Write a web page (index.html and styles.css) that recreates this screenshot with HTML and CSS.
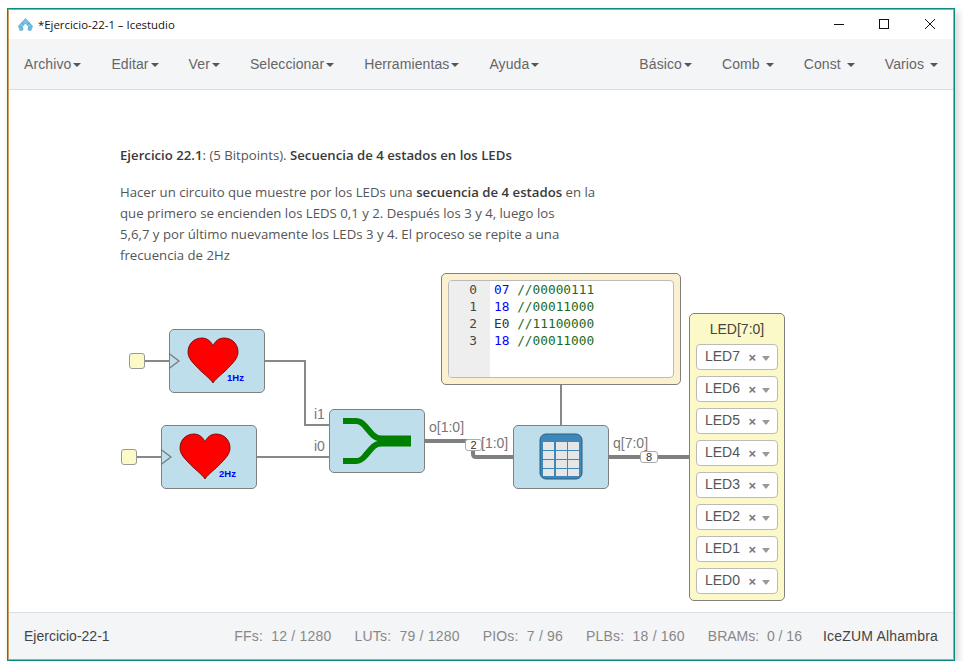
FILE: index.html
```html
<!DOCTYPE html>
<html lang="es">
<head>
    <meta charset="UTF-8">
    <meta name="viewport" content="width=device-width, initial-scale=1.0">
    <title>Ejercicio-22-1 – Icestudio</title>
    <link rel="stylesheet" href="styles.css">
</head>
<body>
    <div class="window">
        <div class="titlebar">
            <svg class="app-icon" width="15" height="13" viewBox="0 0 15 13">
                <path d="M0.500 8 L7.500 0.500 L14.500 8 L13 12.500 L10 12 L10.500 8.500 L7.500 5 L4.500 8.500 L5 12 L2 12.500 Z" fill="#74c4ea" stroke="#4a9cc4" stroke-width="0.600"/>
                <path d="M3.500 4.500 L5.500 6.500 M11.500 4.500 L9.500 6.500 M2 8.500 L4 10.500 M13 8.500 L11 10.500" fill="none" stroke="#3f8fb8" stroke-width="0.700"/>
            </svg>
            <span class="app-title">*Ejercicio-22-1 – Icestudio</span>
            <div class="win-controls">
                <svg width="10" height="10" viewBox="0 0 10 10"><path d="M0 5.500 H10" stroke="#111" fill="none"/></svg>
                <svg width="10" height="10" viewBox="0 0 10 10"><rect x="0.500" y="0.500" width="9" height="9" stroke="#111" fill="none"/></svg>
                <svg class="win-close" width="10" height="10" viewBox="0 0 10 10"><path d="M0 0 L10 10 M10 0 L0 10" stroke="#111" fill="none"/></svg>
            </div>
        </div>

        <nav class="menubar">
            <div class="menu-group">
                <a class="menu-item">Archivo<span class="caret"></span></a>
                <a class="menu-item">Editar<span class="caret"></span></a>
                <a class="menu-item">Ver<span class="caret"></span></a>
                <a class="menu-item">Seleccionar<span class="caret"></span></a>
                <a class="menu-item">Herramientas<span class="caret"></span></a>
                <a class="menu-item">Ayuda<span class="caret"></span></a>
            </div>
            <div class="menu-group">
                <a class="menu-item">Básico<span class="caret"></span></a>
                <a class="menu-item">Comb <span class="caret"></span></a>
                <a class="menu-item">Const <span class="caret"></span></a>
                <a class="menu-item">Varios <span class="caret"></span></a>
            </div>
        </nav>

        <main class="content">
            <div class="info">
                <p><strong>Ejercicio 22.1</strong>: (5 Bitpoints). <strong>Secuencia de 4 estados en los LEDs</strong></p>
                <p>Hacer un circuito que muestre por los LEDs una <strong>secuencia de 4 estados</strong> en la<br>
                que primero se encienden los LEDS 0,1 y 2. Después los 3 y 4, luego los<br>
                5,6,7 y por último nuevamente los LEDs 3 y 4. El proceso se repite a una<br>
                frecuencia de 2Hz</p>
            </div>

            <div class="diagram">
                <svg class="wires" width="670" height="335" viewBox="0 0 670 335">
                    <g fill="none" stroke="#888" stroke-width="2">
                        <path d="M25 91 H49"/>
                        <path d="M145 91 H185 V155 H209"/>
                        <path d="M17 187 H41"/>
                        <path d="M137 187 H209"/>
                        <path d="M441 115 V155"/>
                    </g>
                    <g fill="none" stroke="#808080" stroke-width="4">
                        <path d="M305 171 H350"/>
                        <path d="M353 178 V184 Q353 187 356 187 H393"/>
                        <path d="M489 187 H569"/>
                    </g>
                </svg>

                <div class="pin-in pin-a"></div>
                <div class="pin-in pin-b"></div>

                <div class="block block-clk1">
                    <svg class="clk-mark" width="11" height="16" viewBox="0 0 11 16"><path d="M0 0.500 L10 8 L0 15.500" fill="none" stroke="#777" stroke-width="1.200"/></svg>
                    <svg class="heart" width="52" height="47" viewBox="-1 -1 52 47"><path d="M25 45 C22 40 14 35 8 28 C3 23 0 19 0 14 C0 6 6 0 14 0 C19 0 23 3 25 8 C27 3 31 0 36 0 C44 0 50 6 50 14 C50 19 47 23 42 28 C36 35 28 40 25 45 Z" fill="#f00" stroke="#600" stroke-width="0.800"/></svg>
                    <span class="hz">1Hz</span>
                </div>

                <div class="block block-clk2">
                    <svg class="clk-mark" width="11" height="16" viewBox="0 0 11 16"><path d="M0 0.500 L10 8 L0 15.500" fill="none" stroke="#777" stroke-width="1.200"/></svg>
                    <svg class="heart" width="52" height="47" viewBox="-1 -1 52 47"><path d="M25 45 C22 40 14 35 8 28 C3 23 0 19 0 14 C0 6 6 0 14 0 C19 0 23 3 25 8 C27 3 31 0 36 0 C44 0 50 6 50 14 C50 19 47 23 42 28 C36 35 28 40 25 45 Z" fill="#f00" stroke="#600" stroke-width="0.800"/></svg>
                    <span class="hz">2Hz</span>
                </div>

                <div class="block block-mux">
                    <svg class="mux-icon" width="70" height="50" viewBox="0 0 70 50">
                        <path d="M0 4 H13 Q18 4 22 9 L28 16 Q33 22 40 22 M0 44 H13 Q18 44 22 39 L28 32 Q33 26 40 26" fill="none" stroke="#008000" stroke-width="6"/>
                        <rect x="36" y="18.500" width="32" height="11" fill="#008000"/>
                    </svg>
                </div>

                <div class="block block-rom">
                    <svg class="rom-icon" width="44" height="47" viewBox="0 0 44 47">
                        <rect x="1" y="1" width="42" height="45" rx="6" fill="#3d88b8" stroke="#2a5f82"/>
                        <g fill="#e6e6e6">
                            <rect x="4" y="9" width="11" height="8"/><rect x="17" y="9" width="11" height="8"/><rect x="29" y="9" width="11" height="8"/>
                            <rect x="4" y="18" width="11" height="8"/><rect x="17" y="18" width="11" height="8"/><rect x="29" y="18" width="11" height="8"/>
                            <rect x="4" y="27" width="11" height="8"/><rect x="17" y="27" width="11" height="8"/><rect x="29" y="27" width="11" height="8"/>
                            <rect x="4" y="36" width="11" height="7"/><rect x="17" y="36" width="11" height="7"/><rect x="29" y="36" width="11" height="7"/>
                        </g>
                    </svg>
                </div>

                <span class="wire-label l-i1">i1</span>
                <span class="wire-label l-i0">i0</span>
                <span class="wire-label l-o">o[1:0]</span>
                <span class="wire-label l-in">[1:0]</span>
                <span class="wire-label l-q">q[7:0]</span>
                <span class="bus-size size-2">2</span>
                <span class="bus-size size-8">8</span>

                <div class="memory">
                    <div class="editor">
                        <div class="gutter">0<br>1<br>2<br>3</div>
                        <div class="code">
                            <div><span class="num">07</span> <span class="cmt">//00000111</span></div>
                            <div><span class="num">18</span> <span class="cmt">//00011000</span></div>
                            <div><span class="hex">E0</span> <span class="cmt">//11100000</span></div>
                            <div><span class="num">18</span> <span class="cmt">//00011000</span></div>
                        </div>
                    </div>
                </div>

                <div class="leds">
                    <div class="leds-title">LED[7:0]</div>
                    <div class="led-select"><span class="led-name">LED7</span><span class="clear">×</span><span class="arrow"></span></div>
                    <div class="led-select"><span class="led-name">LED6</span><span class="clear">×</span><span class="arrow"></span></div>
                    <div class="led-select"><span class="led-name">LED5</span><span class="clear">×</span><span class="arrow"></span></div>
                    <div class="led-select"><span class="led-name">LED4</span><span class="clear">×</span><span class="arrow"></span></div>
                    <div class="led-select"><span class="led-name">LED3</span><span class="clear">×</span><span class="arrow"></span></div>
                    <div class="led-select"><span class="led-name">LED2</span><span class="clear">×</span><span class="arrow"></span></div>
                    <div class="led-select"><span class="led-name">LED1</span><span class="clear">×</span><span class="arrow"></span></div>
                    <div class="led-select"><span class="led-name">LED0</span><span class="clear">×</span><span class="arrow"></span></div>
                </div>
            </div>
        </main>

        <footer class="statusbar">
            <span class="project">Ejercicio-22-1</span>
            <div class="stats">
                <span class="stat">FFs:&nbsp; 12 / 1280</span>
                <span class="stat">LUTs:&nbsp; 79 / 1280</span>
                <span class="stat">PIOs:&nbsp; 7 / 96</span>
                <span class="stat">PLBs:&nbsp; 18 / 160</span>
                <span class="stat brams">BRAMs:&nbsp; 0 / 16</span>
                <span class="board">IceZUM Alhambra</span>
            </div>
        </footer>
    </div>
</body>
</html>
```

FILE: styles.css
```css
html, body {
    margin: 0;
    padding: 0;
    background-color: #fff;
    overflow: hidden;
}
body {
    padding: 8px 0 0 7px;
    font-family: "Liberation Sans", Arial, sans-serif;
    color: #333;
}
.window {
    width: 948px;
    height: 653px;
    box-sizing: border-box;
    display: flex;
    flex-direction: column;
    background: #fff;
    border: 1px solid #0f8a80;
    box-shadow: inset 0 0 0 1px #c9a35a, 3px 4px 8px rgba(0, 0, 0, 0.18);
    padding: 1px;
}

/* barra de titulo */
.titlebar {
    height: 29px;
    flex: none;
    display: flex;
    align-items: center;
    padding-left: 9px;
    background: #fff;
}
.app-icon {
    margin-right: 5px;
}
.app-title {
    font-family: "Open Sans", sans-serif;
    font-size: 11.400px;
    color: #111;
}
.win-controls {
    margin: 0 18px 2px auto;
    display: flex;
    gap: 35px;
}
.win-close {
    margin-left: 1px;
}

/* menu */
.menubar {
    height: 51px;
    flex: none;
    box-sizing: border-box;
    display: flex;
    justify-content: space-between;
    align-items: center;
    padding: 0 15px;
    background-color: #f4f5f7;
    border-bottom: 1px solid #dcdde0;
}
.menu-group {
    display: flex;
    gap: 30px;
}
.menu-item {
    font-size: 14px;
    letter-spacing: 0.100px;
    color: #666;
    white-space: pre;
}
.caret {
    display: inline-block;
    margin-left: 2px;
    vertical-align: middle;
    border-top: 4px solid #555;
    border-left: 4px solid transparent;
    border-right: 4px solid transparent;
}

/* contenido */
.content {
    flex: 1;
    position: relative;
    background: #fff;
}
.info {
    padding: 55px 0 0 111px;
    font-family: "Open Sans", sans-serif;
    font-size: 13.200px;
    line-height: 21px;
    color: #555;
}
.info p {
    margin: 0 0 16px;
}
.info strong {
    color: #3a3a3a;
    font-weight: 600;
}

.diagram {
    position: absolute;
    left: 111px;
    top: 180px;
    width: 670px;
    height: 335px;
}
.wires {
    position: absolute;
    left: 0;
    top: 0;
}
.pin-in {
    position: absolute;
    width: 16px;
    height: 16px;
    box-sizing: border-box;
    background: #fbf9c8;
    border: 1px solid #999;
    border-radius: 3px;
}
.pin-a { left: 9px; top: 83px; }
.pin-b { left: 1px; top: 179px; }

.block {
    position: absolute;
    width: 96px;
    height: 64px;
    box-sizing: border-box;
    background: #bfdeeb;
    border: 1px solid #808080;
    border-radius: 5px;
}
.block-clk1 { left: 49px; top: 59px; }
.block-clk2 { left: 41px; top: 155px; }
.block-mux { left: 209px; top: 139px; }
.block-rom { left: 393px; top: 155px; }

.clk-mark {
    position: absolute;
    left: -1px;
    top: 23px;
}
.heart {
    position: absolute;
    left: 17px;
    top: 7px;
}
.hz {
    position: absolute;
    left: 57px;
    top: 42px;
    font-size: 9.500px;
    font-weight: bold;
    color: #00f;
}
.mux-icon {
    position: absolute;
    left: 13px;
    top: 7px;
}
.rom-icon {
    position: absolute;
    left: 25px;
    top: 7px;
}

.wire-label {
    position: absolute;
    font-size: 14px;
    line-height: 16px;
    color: #777;
}
.l-i1 { left: 194px; top: 136px; }
.l-i0 { left: 194px; top: 168px; }
.l-o { left: 309px; top: 149px; }
.l-in { left: 361px; top: 165px; }
.l-q { left: 493px; top: 165px; }

.bus-size {
    position: absolute;
    height: 12px;
    box-sizing: border-box;
    background: #fff;
    border: 1px solid #aaa;
    border-radius: 3px;
    font-size: 11px;
    line-height: 10px;
    text-align: center;
    color: #333;
}
.size-2 { left: 345px; top: 169px; width: 17px; }
.size-8 { left: 520px; top: 181px; width: 18px; }

.memory {
    position: absolute;
    left: 321px;
    top: 3px;
    width: 240px;
    height: 112px;
    box-sizing: border-box;
    padding: 6px;
    background: #fbf0cf;
    border: 1px solid #808080;
    border-radius: 5px;
}
.editor {
    height: 100%;
    box-sizing: border-box;
    display: flex;
    overflow: hidden;
    background: #fff;
    border: 1px solid #bbb;
    border-radius: 4px;
    font-family: "DejaVu Sans Mono", monospace;
    font-size: 12.800px;
    line-height: 17px;
}
.gutter {
    width: 41px;
    flex: none;
    box-sizing: border-box;
    padding-right: 13px;
    text-align: right;
    background: #eee;
    color: #444;
}
.code {
    padding-left: 4px;
}
.num { color: #00f; }
.hex { color: #333; }
.cmt { color: #1a6b1a; }

.leds {
    position: absolute;
    left: 569px;
    top: 43px;
    width: 96px;
    height: 288px;
    box-sizing: border-box;
    padding: 0 6px;
    display: flex;
    flex-direction: column;
    gap: 6px;
    background: #fbf9c8;
    border: 1px solid #808080;
    border-radius: 5px;
}
.leds-title {
    height: 24px;
    font-size: 14px;
    line-height: 30px;
    text-align: center;
    color: #444;
}
.led-select {
    height: 26px;
    flex: none;
    box-sizing: border-box;
    display: flex;
    align-items: center;
    padding: 0 7px 0 8px;
    background: #fff;
    border: 1px solid #bbb;
    border-radius: 4px;
    font-size: 14px;
    color: #555;
}
.led-name {
    flex: 1;
    margin-top: -2px;
}
.clear {
    margin-right: 6px;
    font-size: 13px;
    font-weight: bold;
    color: #777;
}
.arrow {
    margin-top: 2px;
    border-top: 5px solid #999;
    border-left: 4px solid transparent;
    border-right: 4px solid transparent;
}

/* barra de estado */
.statusbar {
    height: 47px;
    flex: none;
    box-sizing: border-box;
    display: flex;
    justify-content: space-between;
    align-items: center;
    padding: 0 15px;
    background-color: #f4f5f7;
    border-top: 1px solid #dcdde0;
    font-size: 14px;
}
.project {
    color: #444;
}
.stats {
    display: flex;
    gap: 23px;
    letter-spacing: 0.200px;
}
.stat {
    color: #888;
}
.stat.brams {
    letter-spacing: 0;
}
.board {
    margin-left: -2px;
    color: #444;
}
```
